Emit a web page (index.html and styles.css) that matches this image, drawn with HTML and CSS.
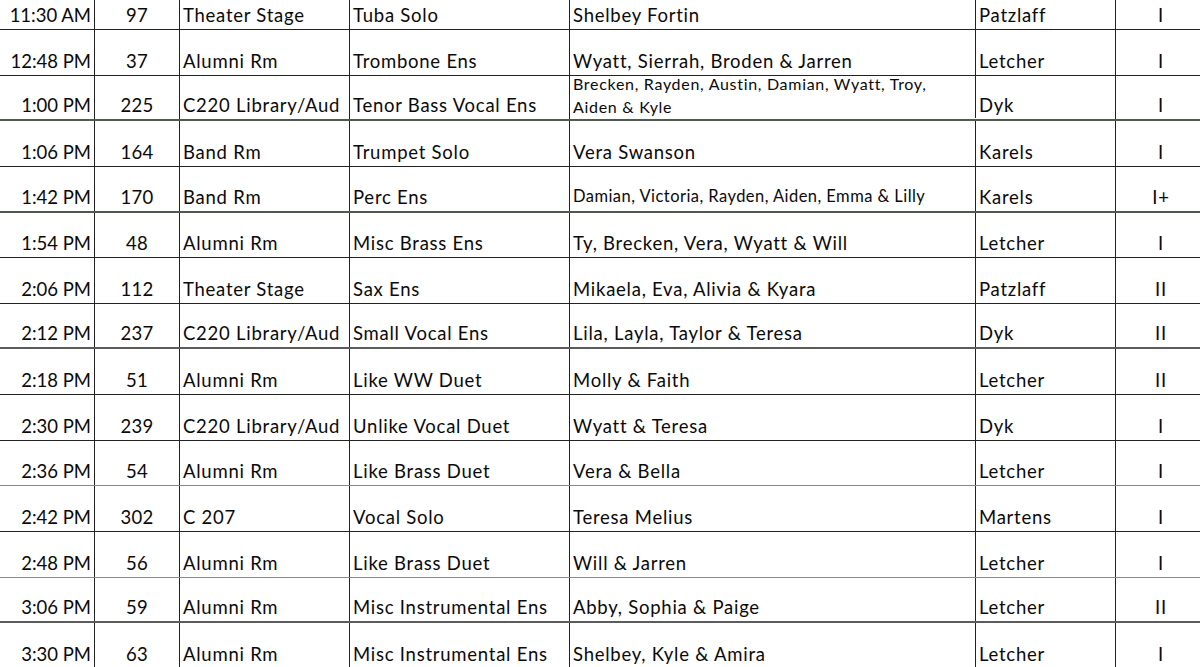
FILE: index.html
```html
<!DOCTYPE html>
<html>
<head>
<meta charset="utf-8">
<link rel="stylesheet" href="styles.css">
</head>
<body>
<div class="sheet">
  <div class="row first line-dark">
    <div class="c time">11:30 AM</div><div class="c num">97</div><div class="c txt">Theater Stage</div><div class="c txt">Tuba Solo</div><div class="c txt">Shelbey Fortin</div><div class="c txt">Patzlaff</div><div class="c rate">I</div>
  </div>
  <div class="row line-dark">
    <div class="c time">12:48 PM</div><div class="c num">37</div><div class="c txt">Alumni Rm</div><div class="c txt">Trombone Ens</div><div class="c txt">Wyatt, Sierrah, Broden &amp; Jarren</div><div class="c txt">Letcher</div><div class="c rate">I</div>
  </div>
  <div class="row line-double">
    <div class="c time">1:00 PM</div><div class="c num">225</div><div class="c txt">C220 Library/Aud</div><div class="c txt">Tenor Bass Vocal Ens</div><div class="c txt wrap">Brecken, Rayden, Austin, Damian, Wyatt, Troy,<br>Aiden &amp; Kyle</div><div class="c txt">Dyk</div><div class="c rate">I</div>
  </div>
  <div class="row line-dark">
    <div class="c time">1:06 PM</div><div class="c num">164</div><div class="c txt">Band Rm</div><div class="c txt">Trumpet Solo</div><div class="c txt">Vera Swanson</div><div class="c txt">Karels</div><div class="c rate">I</div>
  </div>
  <div class="row line-double">
    <div class="c time">1:42 PM</div><div class="c num">170</div><div class="c txt">Band Rm</div><div class="c txt">Perc Ens</div><div class="c txt small">Damian, Victoria, Rayden, Aiden, Emma &amp; Lilly</div><div class="c txt">Karels</div><div class="c rate">I+</div>
  </div>
  <div class="row line-dark">
    <div class="c time">1:54 PM</div><div class="c num">48</div><div class="c txt">Alumni Rm</div><div class="c txt">Misc Brass Ens</div><div class="c txt">Ty, Brecken, Vera, Wyatt &amp; Will</div><div class="c txt">Letcher</div><div class="c rate">I</div>
  </div>
  <div class="row line-dark">
    <div class="c time">2:06 PM</div><div class="c num">112</div><div class="c txt">Theater Stage</div><div class="c txt">Sax Ens</div><div class="c txt">Mikaela, Eva, Alivia &amp; Kyara</div><div class="c txt">Patzlaff</div><div class="c rate">II</div>
  </div>
  <div class="row line-grey">
    <div class="c time">2:12 PM</div><div class="c num">237</div><div class="c txt">C220 Library/Aud</div><div class="c txt">Small Vocal Ens</div><div class="c txt">Lila, Layla, Taylor &amp; Teresa</div><div class="c txt">Dyk</div><div class="c rate">II</div>
  </div>
  <div class="row line-dark">
    <div class="c time">2:18 PM</div><div class="c num">51</div><div class="c txt">Alumni Rm</div><div class="c txt">Like WW Duet</div><div class="c txt">Molly &amp; Faith</div><div class="c txt">Letcher</div><div class="c rate">II</div>
  </div>
  <div class="row line-dark">
    <div class="c time">2:30 PM</div><div class="c num">239</div><div class="c txt">C220 Library/Aud</div><div class="c txt">Unlike Vocal Duet</div><div class="c txt">Wyatt &amp; Teresa</div><div class="c txt">Dyk</div><div class="c rate">I</div>
  </div>
  <div class="row line-green">
    <div class="c time">2:36 PM</div><div class="c num">54</div><div class="c txt">Alumni Rm</div><div class="c txt">Like Brass Duet</div><div class="c txt">Vera &amp; Bella</div><div class="c txt">Letcher</div><div class="c rate">I</div>
  </div>
  <div class="row line-dark">
    <div class="c time">2:42 PM</div><div class="c num">302</div><div class="c txt">C 207</div><div class="c txt">Vocal Solo</div><div class="c txt">Teresa Melius</div><div class="c txt">Martens</div><div class="c rate">I</div>
  </div>
  <div class="row line-green">
    <div class="c time">2:48 PM</div><div class="c num">56</div><div class="c txt">Alumni Rm</div><div class="c txt">Like Brass Duet</div><div class="c txt">Will &amp; Jarren</div><div class="c txt">Letcher</div><div class="c rate">I</div>
  </div>
  <div class="row line-grey">
    <div class="c time">3:06 PM</div><div class="c num">59</div><div class="c txt">Alumni Rm</div><div class="c txt">Misc Instrumental Ens</div><div class="c txt">Abby, Sophia &amp; Paige</div><div class="c txt">Letcher</div><div class="c rate">II</div>
  </div>
  <div class="row line-dark">
    <div class="c time">3:30 PM</div><div class="c num">63</div><div class="c txt">Alumni Rm</div><div class="c txt">Misc Instrumental Ens</div><div class="c txt">Shelbey, Kyle &amp; Amira</div><div class="c txt">Letcher</div><div class="c rate">I</div>
  </div>
</div>
</body>
</html>
```
FILE: styles.css
```css
html, body {
  margin: 0;
  padding: 0;
  background: #ffffff;
  overflow: hidden;
}

body {
  width: 1200px;
  height: 667px;
}

.sheet {
  width: 1206px;
  font-family: Lato, "Liberation Sans", sans-serif;
  font-size: 18.5px;
  letter-spacing: 0.75px;
  color: #0a0a0a;
}

.row {
  display: grid;
  grid-template-columns: 95px 85px 170px 220px 406px 140px 90px;
  height: 45.65px;
  box-sizing: border-box;
  border-bottom: 1px solid #222222;
}

.row.first {
  height: 30px;
}

.row.line-double {
  border-bottom: 2px solid #4e5a4e;
}

.row.line-grey {
  border-bottom: 2px solid #5c5c5c;
}

.row.line-green {
  border-bottom: 1px solid #6f9a6a;
}

.c {
  display: flex;
  align-items: flex-end;
  box-sizing: border-box;
  border-right: 1px solid #222222;
  line-height: 20px;
  padding-bottom: 4px;
  white-space: nowrap;
  overflow: visible;
}

.c.time {
  justify-content: flex-end;
  padding-right: 3px;
  letter-spacing: 0;
}

.c.num {
  justify-content: center;
  letter-spacing: 0.3px;
}

.c.txt {
  padding-left: 3px;
}

.c.rate {
  justify-content: center;
  border-right: none;
}

.c.wrap {
  display: block;
  align-self: start;
  font-size: 16px;
  letter-spacing: 0.7px;
  line-height: 23px;
  padding-top: 0;
  padding-bottom: 0;
  margin-top: -4px;
}

.c.small {
  font-size: 16.5px;
  letter-spacing: 0.45px;
  padding-bottom: 5px;
}
```
